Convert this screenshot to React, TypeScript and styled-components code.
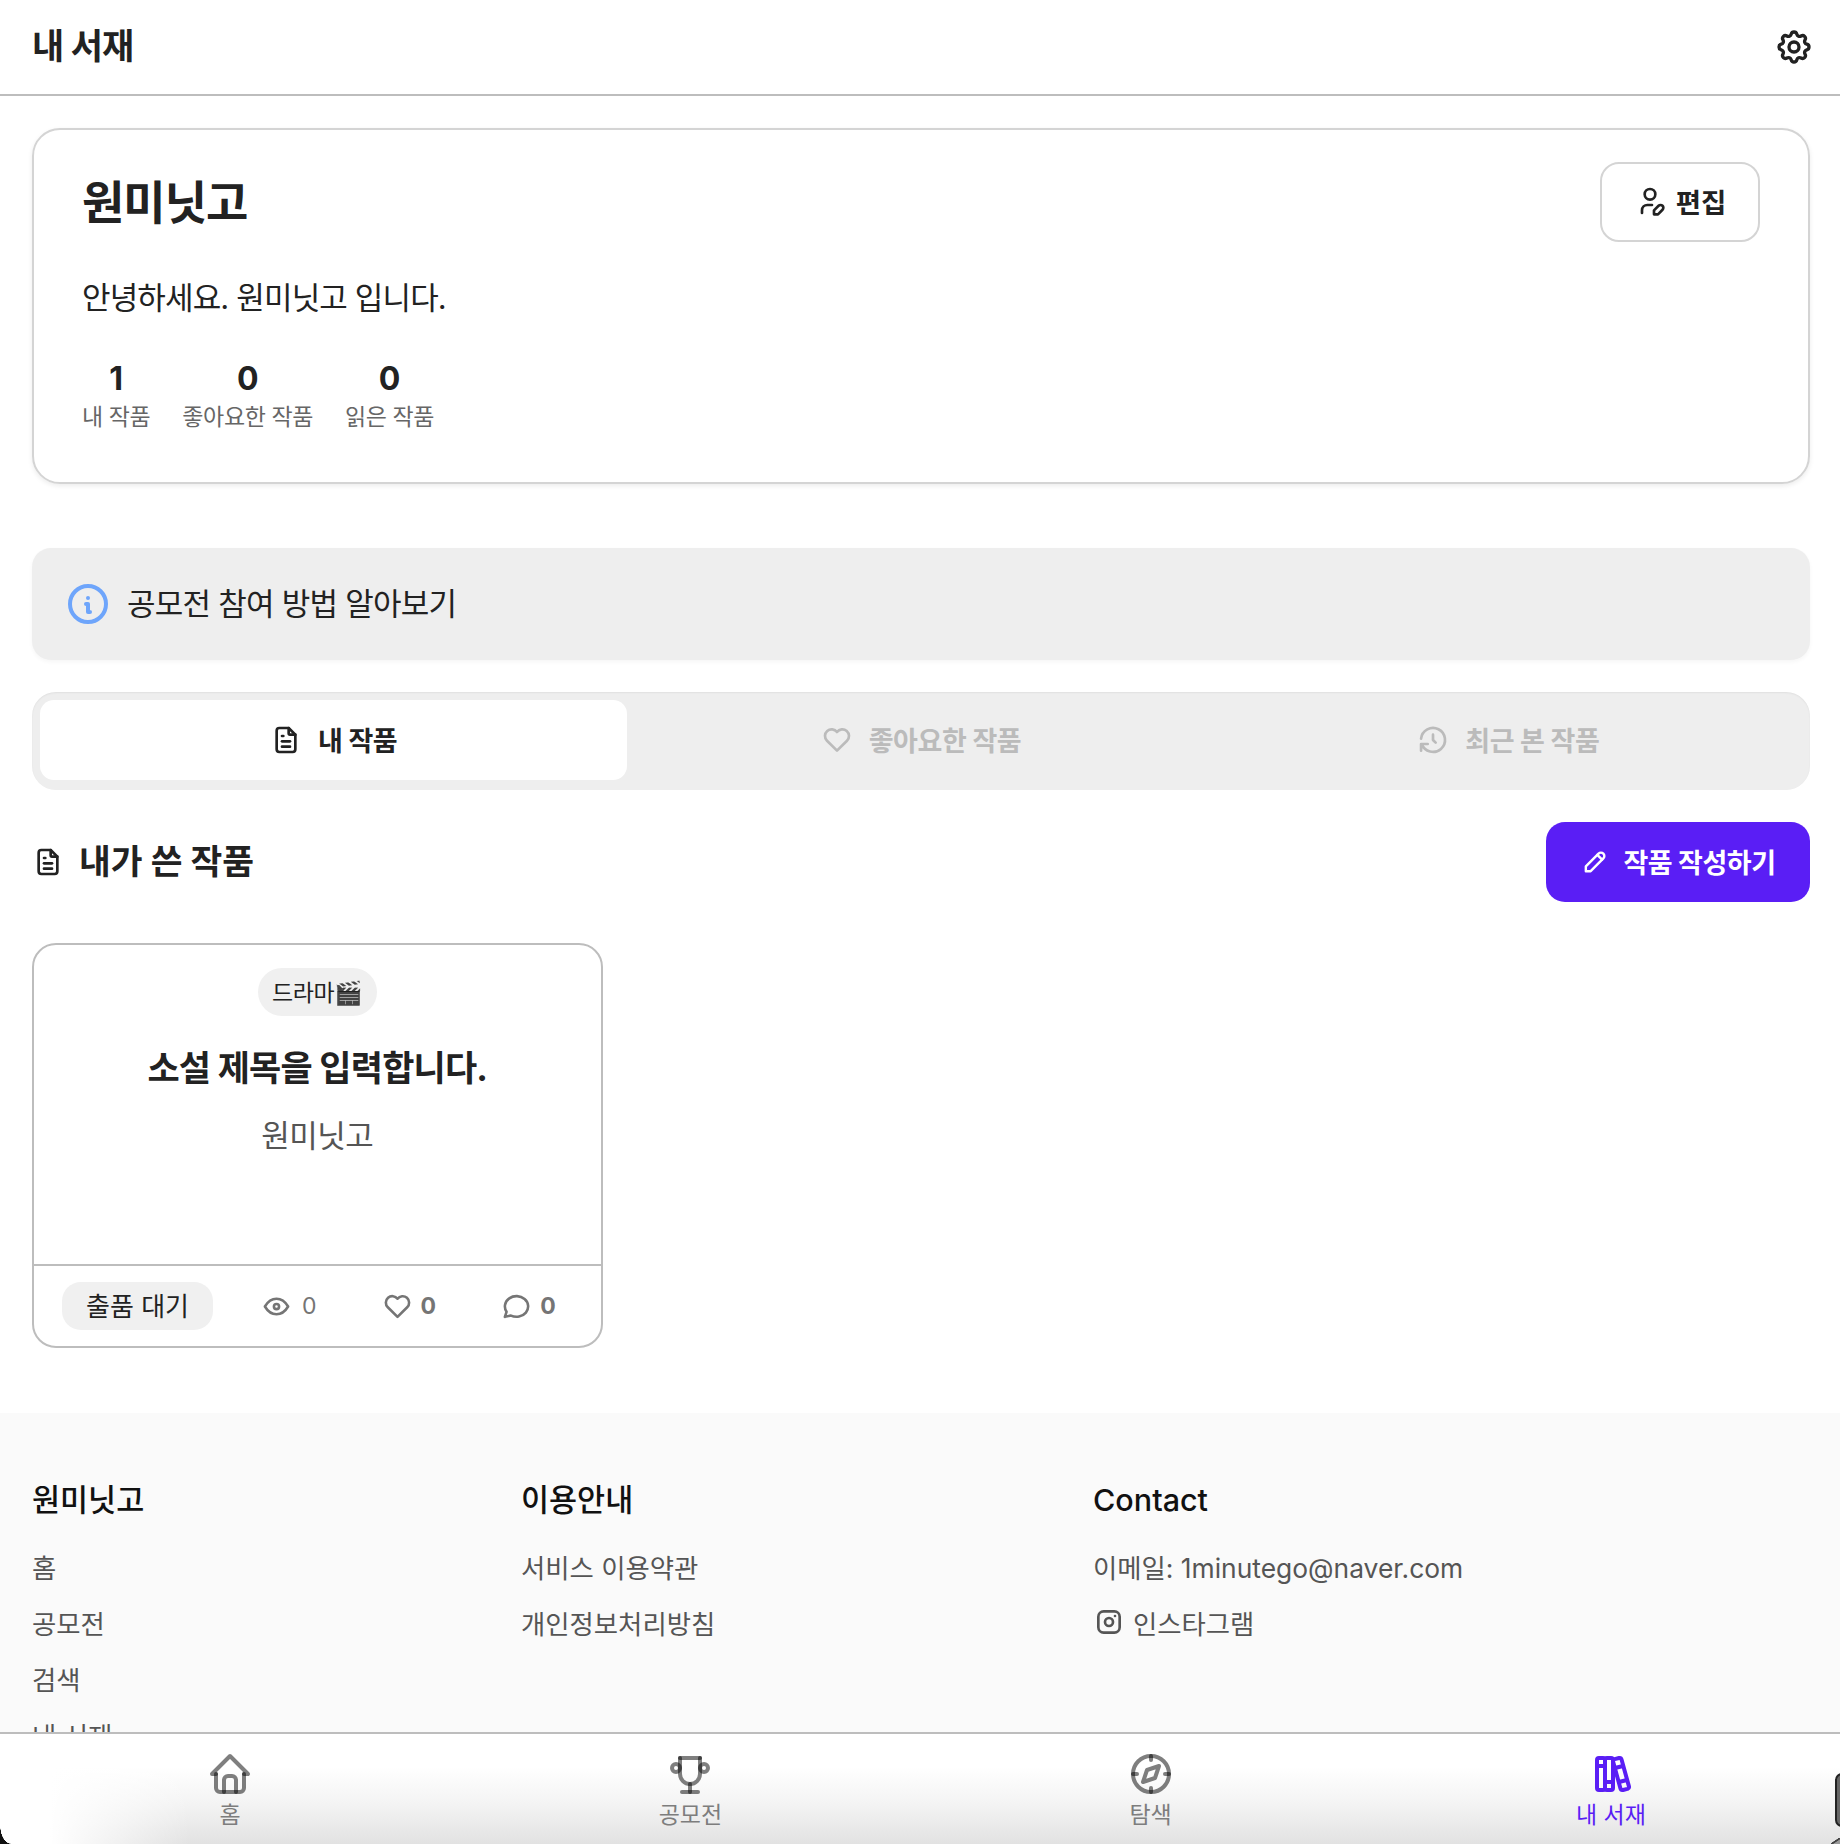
import React from 'react';
import styled, { createGlobalStyle } from 'styled-components';
import {
  TbSettings, TbUserEdit, TbInfoCircle, TbFileText, TbHeart, TbHistory, TbPencil,
  TbEye, TbMessageCircle, TbBrandInstagram, TbHome, TbTrophy, TbCompass, TbBooks,
} from 'react-icons/tb';

const FONT = `Inter, "Noto Sans CJK KR", "Noto Sans", sans-serif`;

const Global = createGlobalStyle`
  html, body { margin: 0; padding: 0; background: #fff; }
  body { font-family: ${FONT}; color: #222; }
  * { box-sizing: border-box; }
`;

const Shell = styled.div`
  position: relative;
  height: 100vh;
  overflow: hidden;
  display: flex;
  flex-direction: column;
  background: #fff;
`;

const Header = styled.header`
  height: 96px;
  flex: none;
  display: flex;
  align-items: center;
  justify-content: space-between;
  padding: 0 26px 0 32px;
  border-bottom: 2px solid #bdbdbd;
`;

const HeaderTitle = styled.h1`
  margin: 0 0 2px;
  font-size: 35px;
  font-weight: 700;
  line-height: 46px;
  letter-spacing: -0.9px;
`;

const Main = styled.main`
  padding: 32px 30px 65px 32px;
  display: flex;
  flex-direction: column;
`;

const ProfileCard = styled.section`
  height: 356px;
  border: 2px solid #d4d4d4;
  border-radius: 28px;
  padding: 32px 48px 0 48px;
  box-shadow: 0 2px 5px rgba(0, 0, 0, 0.08);
`;

const ProfileTop = styled.div`
  display: flex;
  justify-content: space-between;
  align-items: center;
`;

const ProfileName = styled.h2`
  margin: 0;
  font-size: 46px;
  font-weight: 700;
  line-height: 60px;
  letter-spacing: -1px;
`;

const EditButton = styled.button`
  width: 160px;
  height: 80px;
  padding: 0 0 2px;
  display: flex;
  align-items: center;
  justify-content: center;
  gap: 10px;
  background: #fff;
  border: 2px solid #d4d4d4;
  border-radius: 19px;
  font-family: ${FONT};
  font-size: 27.5px;
  font-weight: 700;
  color: #222;
  svg { width: 32px; height: 32px; }
`;

const Bio = styled.p`
  margin: 33px 0 0;
  font-size: 31px;
  line-height: 46px;
  letter-spacing: -0.85px;
  color: #222;
`;

const Stats = styled.div`
  display: flex;
  gap: 32px;
  margin-top: 38px;
`;

const Stat = styled.div`
  display: flex;
  flex-direction: column;
  align-items: center;
`;

const StatNumber = styled.strong`
  font-size: 32px;
  font-weight: 700;
  line-height: 40px;
`;

const StatLabel = styled.span`
  font-size: 23px;
  line-height: 34px;
  margin-top: 1px;
  letter-spacing: -0.4px;
  color: #666;
`;

const Notice = styled.div`
  margin-top: 64px;
  height: 112px;
  display: flex;
  align-items: center;
  gap: 19px;
  padding: 0 36px;
  background: #eeeeee;
  border-radius: 19px;
  font-size: 31px;
  color: #222;
  box-shadow: 0 2px 4px rgba(0, 0, 0, 0.04);
  svg { width: 48px; height: 48px; color: #6ea5fb; margin: 0 -4px; flex: none; }
`;

const NoticeText = styled.span`
  padding-bottom: 5px;
  letter-spacing: -0.75px;
`;

const Tabs = styled.div`
  margin-top: 32px;
  height: 98px;
  padding: 8px 8px 10px;
  display: grid;
  grid-template-columns: repeat(3, 1fr);
  background: #eeeeee;
  border-radius: 24px;
  box-shadow: inset 0 1px 2px rgba(0, 0, 0, 0.06);
`;

const Tab = styled.div<{ $active?: boolean }>`
  display: flex;
  align-items: center;
  justify-content: center;
  gap: 16px;
  font-size: 27px;
  font-weight: 700;
  letter-spacing: -0.4px;
  border-radius: 14px;
  color: ${(p) => (p.$active ? '#222' : '#bbbbbb')};
  background: ${(p) => (p.$active ? '#fff' : 'transparent')};
  svg { width: 32px; height: 32px; }
`;

const TabText = styled.span`
  padding-bottom: 2px;
`;

const SectionHead = styled.div`
  margin-top: 32px;
  height: 80px;
  display: flex;
  align-items: center;
  justify-content: space-between;
`;

const SectionTitle = styled.h3`
  margin: 0 0 6px;
  display: flex;
  align-items: center;
  gap: 15px;
  font-size: 34.5px;
  font-weight: 700;
  svg { width: 32px; height: 32px; margin-top: 6px; }
`;

const WriteButton = styled.button`
  width: 264px;
  height: 80px;
  padding: 0 0 2px;
  display: flex;
  align-items: center;
  justify-content: center;
  gap: 14px;
  border: 0;
  border-radius: 19px;
  background: #5a1ef5;
  color: #fff;
  font-family: ${FONT};
  font-size: 27px;
  font-weight: 700;
  letter-spacing: -0.5px;
  svg { width: 29px; height: 29px; }
`;

const Grid = styled.div`
  margin-top: 41px;
  display: grid;
  grid-template-columns: repeat(3, 1fr);
  gap: 33px;
`;

const NovelCard = styled.article`
  height: 405px;
  border: 2px solid #bdbdbd;
  border-radius: 24px;
  display: flex;
  flex-direction: column;
`;

const NovelBody = styled.div`
  flex: 1;
  display: flex;
  flex-direction: column;
  align-items: center;
  padding-top: 23px;
`;

const GenreTag = styled.span`
  height: 48px;
  padding: 0 14px 3px;
  display: inline-flex;
  align-items: center;
  border-radius: 24px;
  background: #f0f0f0;
  font-size: 23px;
  letter-spacing: -0.4px;
  color: #222;
`;

const NovelTitle = styled.h4`
  margin: 27px 0 0;
  font-size: 35px;
  line-height: 50px;
  font-weight: 700;
  letter-spacing: -0.8px;
  color: #222;
`;

const NovelAuthor = styled.p`
  margin: 18px 0 0;
  font-size: 31px;
  line-height: 50px;
  letter-spacing: -0.5px;
  color: #555;
`;

const NovelFoot = styled.div`
  height: 82px;
  flex: none;
  border-top: 2px solid #bdbdbd;
  display: flex;
  align-items: center;
  gap: 48px;
  padding: 0 45px 0 28px;
`;

const StatusPill = styled.span`
  width: 151px;
  height: 48px;
  padding-bottom: 4px;
  display: inline-flex;
  align-items: center;
  justify-content: center;
  border-radius: 19px;
  background: #f0f0f0;
  font-size: 26px;
  color: #222;
`;

const Metrics = styled.div`
  flex: 1;
  display: flex;
  align-items: center;
  justify-content: space-between;
`;

const Metric = styled.span<{ $bold?: boolean }>`
  display: inline-flex;
  align-items: center;
  gap: ${(p) => (p.$bold ? 8 : 10)}px;
  font-size: 23px;
  font-weight: ${(p) => (p.$bold ? 700 : 400)};
  color: #757575;
  svg { width: 31px; height: 31px; }
`;

const Footer = styled.footer`
  flex: none;
  height: 700px;
  background: #fafafa;
  padding: 64px 32px 0;
  display: grid;
  grid-template-columns: 489px 572px 1fr;
  align-items: start;
`;

const FooterCol = styled.div`
  display: flex;
  flex-direction: column;
`;

const FooterHead = styled.h5`
  margin: 0 0 15px;
  font-size: 30.5px;
  line-height: 46px;
  font-weight: 500;
  color: #111;
`;

const FooterLink = styled.a`
  display: flex;
  align-items: center;
  gap: 8px;
  height: 56px;
  font-size: 26.4px;
  color: #555;
  svg { width: 32px; height: 32px; }
`;

const Nav = styled.nav`
  position: absolute;
  left: 0;
  right: 0;
  bottom: 0;
  height: 112px;
  display: grid;
  grid-template-columns: repeat(4, 1fr);
  gap: 2px;
  padding-left: 1px;
  border-top: 2px solid #bdbdbd;
  background:
    linear-gradient(to right, #fff 50px, rgba(255, 255, 255, 0) 190px),
    linear-gradient(#fff 30%, #f5f5f5 60%, #e2e2e2 100%);
`;

const NavItem = styled.div<{ $active?: boolean }>`
  display: flex;
  flex-direction: column;
  align-items: center;
  padding-top: 16px;
  font-size: 23px;
  line-height: 30px;
  color: ${(p) => (p.$active ? '#5a1ef5' : '#7d7d7d')};
  svg {
    width: 48px;
    height: 48px;
    margin-bottom: 2px;
    stroke: ${(p) => (p.$active ? '#5a1ef5' : 'rgba(0, 0, 0, 0.5)')};
  }
`;

const CornerLeft = styled.div`
  position: absolute;
  left: 0;
  bottom: 0;
  width: 11px;
  height: 19px;
  background: radial-gradient(ellipse 11px 19px at 100% 0, transparent 97%, #111 100%);
`;

const CornerRight = styled.div`
  position: absolute;
  right: -9px;
  bottom: 17px;
  width: 14px;
  height: 54px;
  border: 2px solid #222;
  border-radius: 8px;
  background: #666;
`;

const CornerTail = styled.div`
  position: absolute;
  right: 0;
  bottom: 0;
  width: 9px;
  height: 6px;
  background: linear-gradient(to bottom right, transparent 40%, #444 46%, #444 58%, #999 64%);
`;

const NAV = [
  { label: '홈', Icon: TbHome },
  { label: '공모전', Icon: TbTrophy },
  { label: '탐색', Icon: TbCompass },
  { label: '내 서재', Icon: TbBooks, active: true },
];

export default function App() {
  return (
    <Shell>
      <Global />
      <Header>
        <HeaderTitle>내 서재</HeaderTitle>
        <TbSettings size={40} color="#222" />
      </Header>
      <Main>
        <ProfileCard>
          <ProfileTop>
            <ProfileName>원미닛고</ProfileName>
            <EditButton><TbUserEdit />편집</EditButton>
          </ProfileTop>
          <Bio>안녕하세요. 원미닛고 입니다.</Bio>
          <Stats>
            <Stat><StatNumber>1</StatNumber><StatLabel>내 작품</StatLabel></Stat>
            <Stat><StatNumber>0</StatNumber><StatLabel>좋아요한 작품</StatLabel></Stat>
            <Stat><StatNumber>0</StatNumber><StatLabel>읽은 작품</StatLabel></Stat>
          </Stats>
        </ProfileCard>
        <Notice><TbInfoCircle /><NoticeText>공모전 참여 방법 알아보기</NoticeText></Notice>
        <Tabs>
          <Tab $active><TbFileText /><TabText>내 작품</TabText></Tab>
          <Tab><TbHeart /><TabText>좋아요한 작품</TabText></Tab>
          <Tab><TbHistory /><TabText>최근 본 작품</TabText></Tab>
        </Tabs>
        <SectionHead>
          <SectionTitle><TbFileText />내가 쓴 작품</SectionTitle>
          <WriteButton><TbPencil />작품 작성하기</WriteButton>
        </SectionHead>
        <Grid>
          <NovelCard>
            <NovelBody>
              <GenreTag>드라마🎬</GenreTag>
              <NovelTitle>소설 제목을 입력합니다.</NovelTitle>
              <NovelAuthor>원미닛고</NovelAuthor>
            </NovelBody>
            <NovelFoot>
              <StatusPill>출품 대기</StatusPill>
              <Metrics>
                <Metric><TbEye />0</Metric>
                <Metric $bold><TbHeart />0</Metric>
                <Metric $bold><TbMessageCircle />0</Metric>
              </Metrics>
            </NovelFoot>
          </NovelCard>
        </Grid>
      </Main>
      <Footer>
        <FooterCol>
          <FooterHead>원미닛고</FooterHead>
          <FooterLink>홈</FooterLink>
          <FooterLink>공모전</FooterLink>
          <FooterLink>검색</FooterLink>
          <FooterLink>내 서재</FooterLink>
        </FooterCol>
        <FooterCol>
          <FooterHead>이용안내</FooterHead>
          <FooterLink>서비스 이용약관</FooterLink>
          <FooterLink>개인정보처리방침</FooterLink>
        </FooterCol>
        <FooterCol>
          <FooterHead>Contact</FooterHead>
          <FooterLink>이메일: 1minutego@naver.com</FooterLink>
          <FooterLink><TbBrandInstagram />인스타그램</FooterLink>
        </FooterCol>
      </Footer>
      <Nav>
        {NAV.map(({ label, Icon, active }) => (
          <NavItem key={label} $active={active}><Icon />{label}</NavItem>
        ))}
      </Nav>
      <CornerLeft />
      <CornerRight />
      <CornerTail />
    </Shell>
  );
}
